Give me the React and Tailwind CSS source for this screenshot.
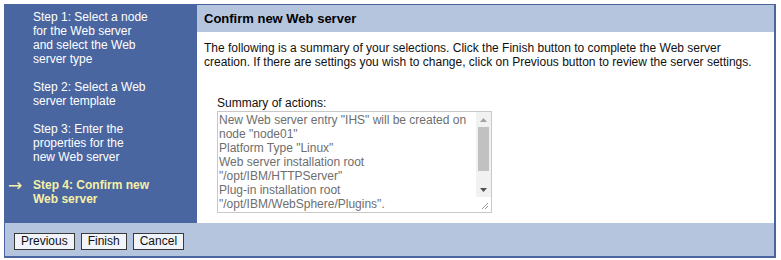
import React from 'react';

const steps = [
  ['Step 1: Select a node', 'for the Web server', 'and select the Web', 'server type'],
  ['Step 2: Select a Web', 'server template'],
  ['Step 3: Enter the', 'properties for the', 'new Web server'],
];

const summary = [
  'New Web server entry "IHS" will be created on',
  'node "node01"',
  'Platform Type "Linux"',
  'Web server installation root',
  '"/opt/IBM/HTTPServer"',
  'Plug-in installation root',
  '"/opt/IBM/WebSphere/Plugins".',
].join('\n');

function WizButton({ children }) {
  return (
    <button className="h-[17px] px-[6px] bg-[#f2f4fb] border border-[#3a3a3a] text-[12px] leading-[15px] text-[#111]">
      {children}
    </button>
  );
}

// classic scrollbar drawn next to the text box
function FakeScrollbar() {
  return (
    <div className="w-[15px] flex flex-col bg-[#f1f1f1]">
      <div className="h-[15px] flex items-center justify-center">
        <svg width="7" height="4" viewBox="0 0 7 4"><path d="M0 4 L3.5 0 L7 4 Z" fill="#a3a3a3" /></svg>
      </div>
      <div className="h-[44px] mx-[2px] bg-[#c1c1c1]" />
      <div className="flex-1" />
      <div className="h-[15px] flex items-center justify-center">
        <svg width="7" height="4" viewBox="0 0 7 4"><path d="M0 0 L7 0 L3.5 4 Z" fill="#505050" /></svg>
      </div>
      <div className="h-[15px] bg-white flex items-end justify-end p-[2px]">
        <svg width="8" height="8" viewBox="0 0 8 8">
          <path d="M7 1 L1 7 M7 4 L4 7" stroke="#9a9a9a" strokeWidth="1" />
        </svg>
      </div>
    </div>
  );
}

export default function App() {
  return (
    <div className="w-[781px] h-[260px] bg-white pt-[4px] pl-[4px] font-['Liberation_Sans',Arial,sans-serif]">
      <div className="w-[772px] h-[254px] border-t border-l border-r-2 border-b-2 border-[#4a659f] flex flex-col">
        <div className="flex h-[218px]">
          {/* wizard steps */}
          <div className="w-[192px] bg-[#4a66a0] pt-[5px] text-[12px] leading-[14px] text-white">
            {steps.map((lines, i) => (
              <p key={i} className="pl-[28px] mb-[14px]">
                {lines.map((l, j) => (
                  <span key={j} className="block">{l}</span>
                ))}
              </p>
            ))}
            <div className="flex text-[#f6f0a6] font-bold">
              <span className="w-[28px] pl-[3px] font-normal text-[17px] leading-[14px] font-['DejaVu_Sans',sans-serif]">→</span>
              <p>
                <span className="block">Step 4: Confirm new</span>
                <span className="block">Web server</span>
              </p>
            </div>
          </div>

          {/* main content */}
          <div className="flex-1 flex flex-col">
            <div className="h-[27px] bg-[#b5c5de] pl-[7px] flex items-center text-[13px] font-bold text-black">
              Confirm new Web server
            </div>
            <div className="pl-[7px] pt-[9px] text-[12px] leading-[14px] text-[#111]">
              <p>
                The following is a summary of your selections. Click the Finish button to complete the Web server
                <br />
                creation. If there are settings you wish to change, click on Previous button to review the server settings.
              </p>
              <div className="pl-[13px] mt-[27px]">
                <label className="block">Summary of actions:</label>
                <div className="mt-[1px] flex w-[275px] h-[102px] border border-[#c8c8c8]">
                  <textarea
                    readOnly
                    value={summary}
                    className="flex-1 resize-none overflow-hidden pl-[1px] pt-[1px] text-[12px] leading-[14px] text-[#6e6e6e] outline-none font-['Liberation_Sans',Arial,sans-serif]"
                  />
                  <FakeScrollbar />
                </div>
              </div>
            </div>
          </div>
        </div>

        {/* button bar */}
        <div className="flex-1 bg-[#b5c5de] flex items-center gap-[6px] pl-[9px] pt-[3px]">
          <WizButton>Previous</WizButton>
          <WizButton>Finish</WizButton>
          <WizButton>Cancel</WizButton>
        </div>
      </div>
    </div>
  );
}
